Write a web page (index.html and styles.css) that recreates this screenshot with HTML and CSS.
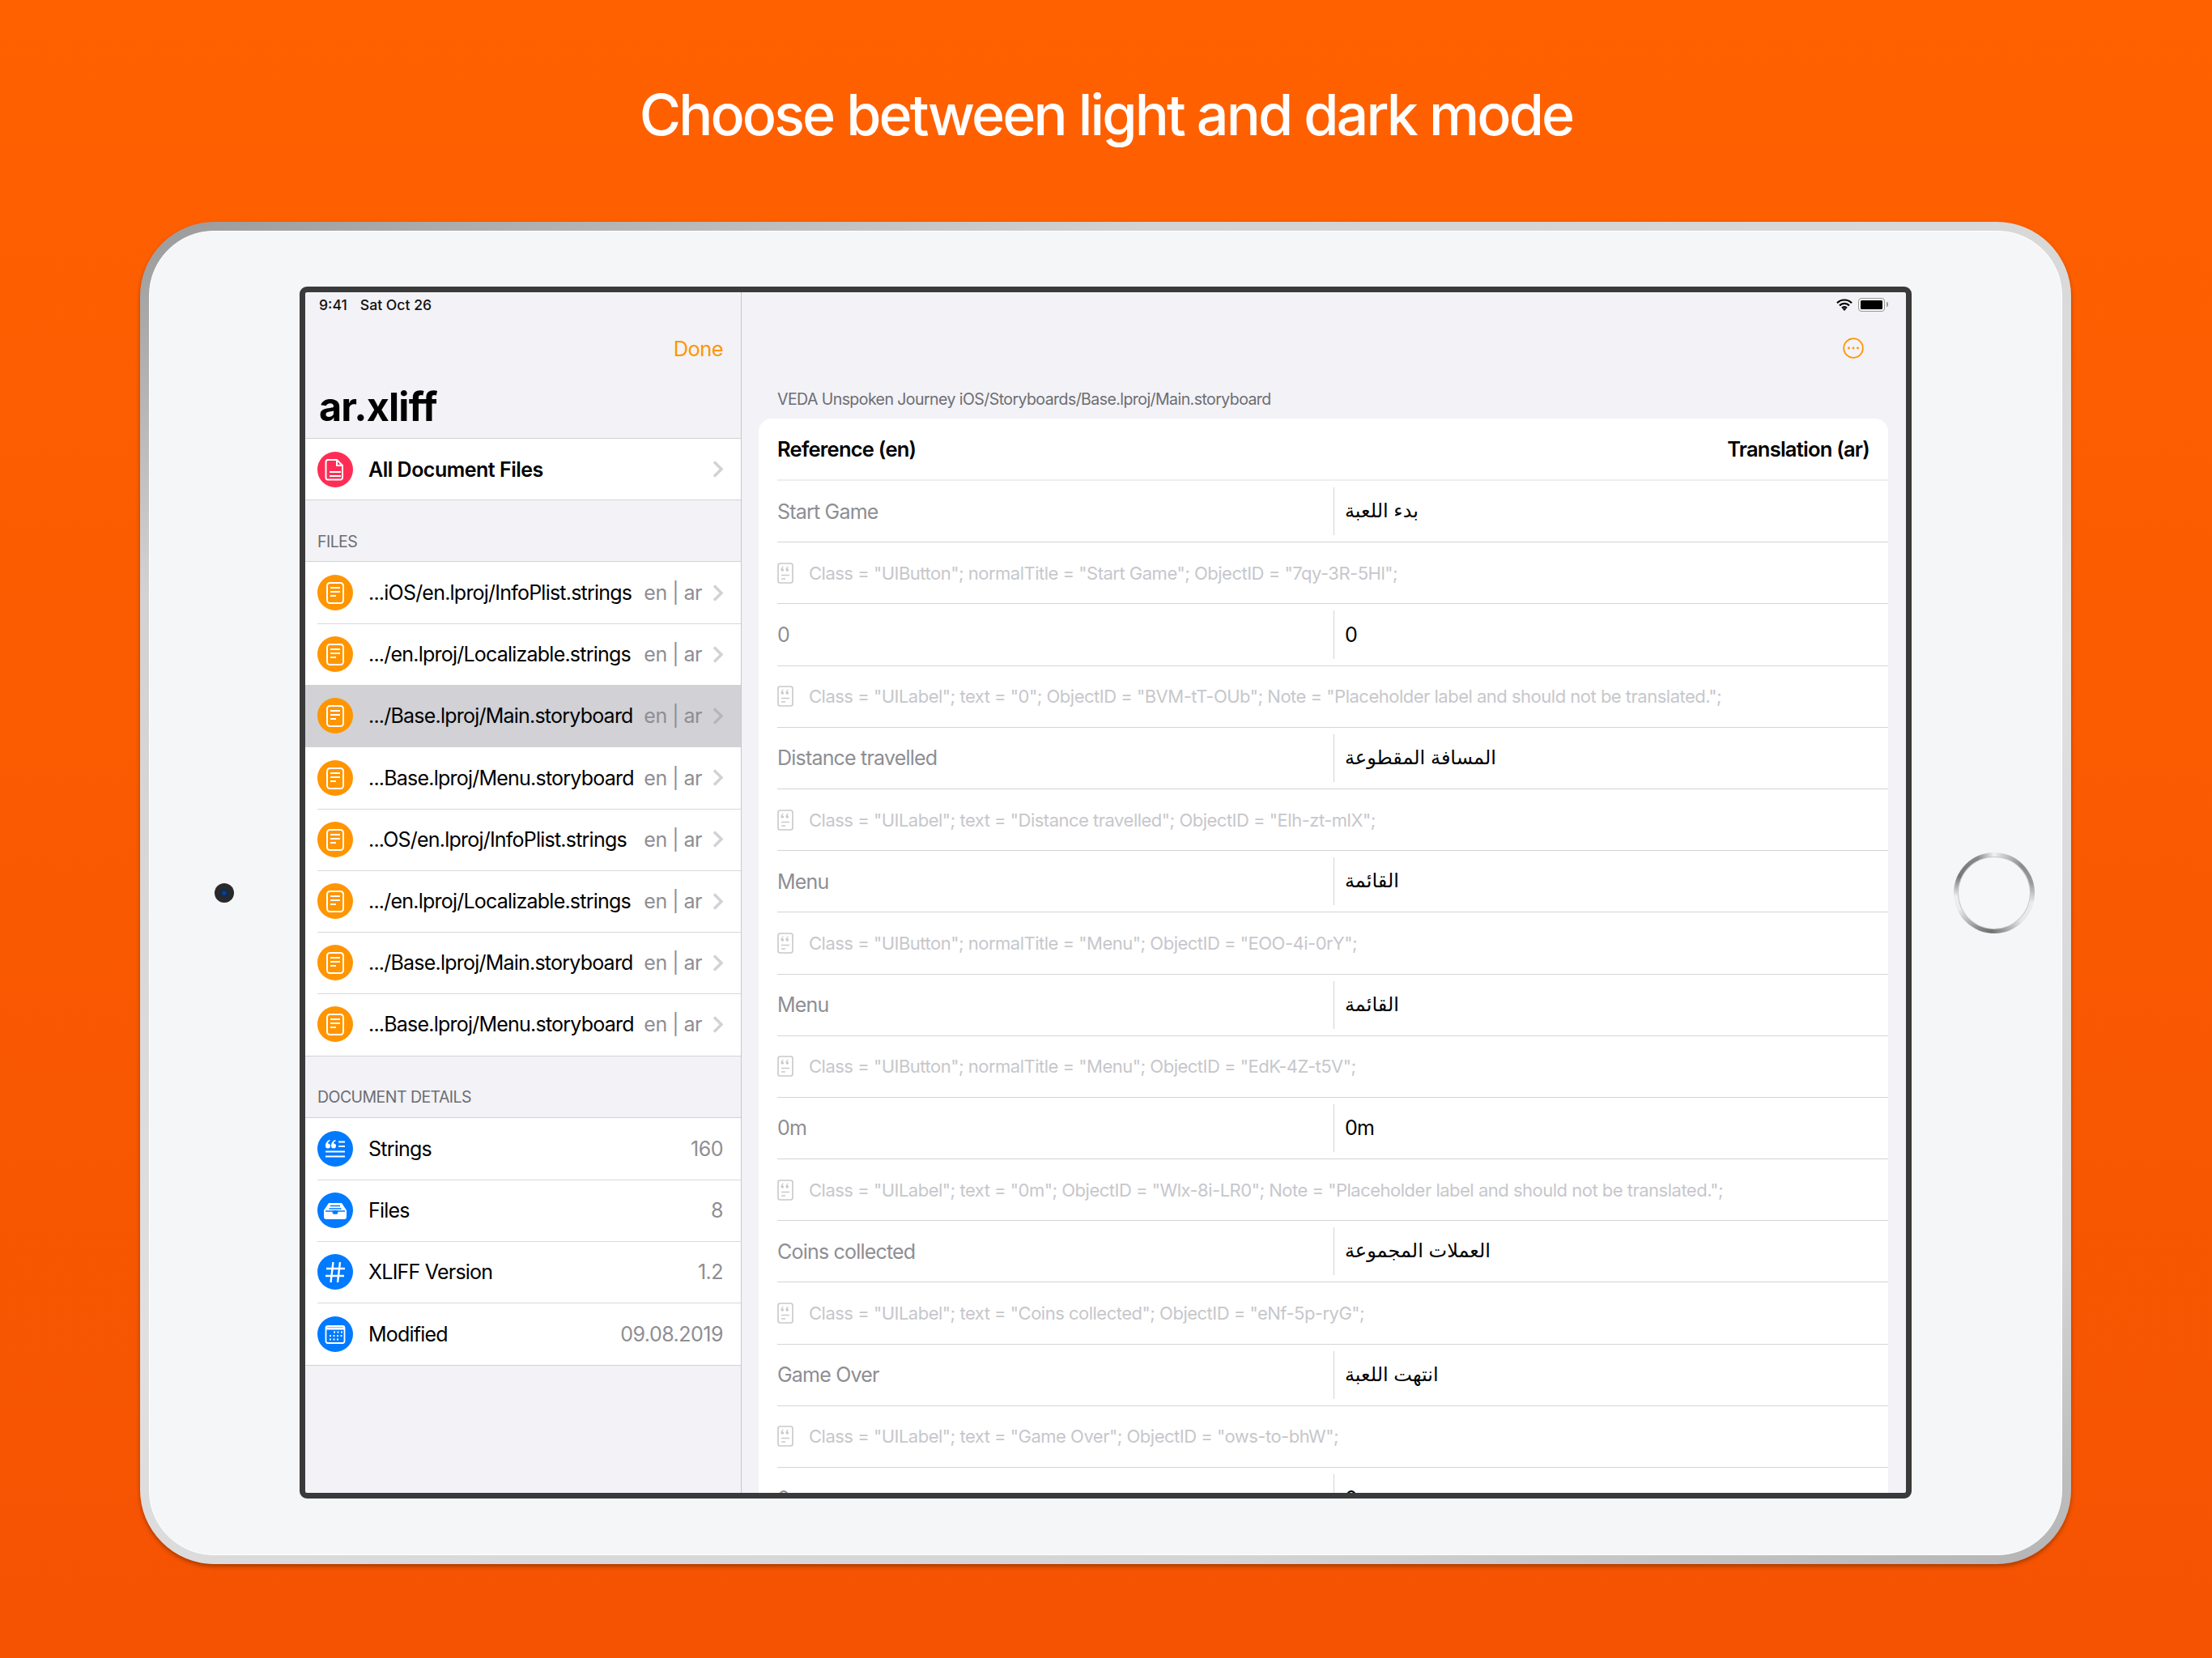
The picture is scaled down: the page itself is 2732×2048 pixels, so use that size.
FILE: index.html
```html
<!DOCTYPE html>
<html>
<head>
  <meta charset="UTF-8">
  <title>Choose between light and dark mode</title>
  <link rel="stylesheet" href="styles.css">
</head>
<body>
  <svg class="defs" width="0" height="0">
    <symbol id="i-doc" viewBox="0 0 44 44">
      <path d="M13 10h11l7 7v15a2.500 2.500 0 0 1-2.500 2.500h-15.500a2.500 2.500 0 0 1-2.500-2.500v-19.500a2.500 2.500 0 0 1 2.500-2.500z" fill="none" stroke="#fff" stroke-width="2"/>
      <path d="M24 10v7h7M15 25h14M15 30h14" fill="none" stroke="#fff" stroke-width="2"/>
    </symbol>
    <symbol id="i-page" viewBox="0 0 44 44">
      <rect x="12" y="10" width="20" height="25" rx="3.500" fill="none" stroke="#fff" stroke-width="2"/>
      <path d="M16 16h12M16 21h12M16 26h7" fill="none" stroke="#fff" stroke-width="2"/>
    </symbol>
    <symbol id="i-strings" viewBox="0 0 44 44">
      <path d="M10 18.500a3 3 0 1 0 3-3c0-1.500 1-2.500 2.500-3v-1.500c-3 .5-5.500 3.500-5.500 7.500z" fill="#fff"/>
      <path d="M17 18.500a3 3 0 1 0 3-3c0-1.500 1-2.500 2.500-3v-1.500c-3 .5-5.500 3.500-5.500 7.500z" fill="#fff"/>
      <path d="M26 13.500h8M26 19h8M10 25.500h24M10 31.500h24" fill="none" stroke="#fff" stroke-width="1.800"/>
    </symbol>
    <symbol id="i-tray" viewBox="0 0 44 44">
      <path d="M14 13h16l6 9v8a3 3 0 0 1-3 3h-22a3 3 0 0 1-3-3v-8z" fill="#fff"/>
      <path d="M16 16.500h12M14.500 20h15" fill="none" stroke="#007aff" stroke-width="1.400"/>
      <path d="M10 23h8.500l1.500 3h4l1.500-3h8.500" fill="none" stroke="#007aff" stroke-width="1.400"/>
      <path d="M19 22h6l-1 4h-4z" fill="#007aff"/>
    </symbol>
    <symbol id="i-hash" viewBox="0 0 44 44">
      <path d="M19.500 10l-3 25M28 10l-3 25M11 18h23M10 27h23" fill="none" stroke="#fff" stroke-width="2.400"/>
    </symbol>
    <symbol id="i-cal" viewBox="0 0 44 44">
      <rect x="10.500" y="12" width="23" height="21" rx="2.500" fill="none" stroke="#fff" stroke-width="1.800"/>
      <path d="M11 15h22" stroke="#fff" stroke-width="3"/>
      <path d="M20 19.500h11M15 24h16M15 28.500h12" fill="none" stroke="#fff" stroke-width="2" stroke-dasharray="2 2.500"/>
    </symbol>
    <symbol id="i-note" viewBox="0 0 20 26">
      <rect x="1" y="1" width="18" height="24" rx="2.500" fill="none" stroke="#c9c9cc" stroke-width="1.600"/>
      <path d="M4.500 9a1.800 1.800 0 1 0 1.800-1.800c0-.8.5-1.400 1.400-1.700v-1c-1.800.3-3.200 2-3.200 4.500z" fill="#c9c9cc"/>
      <path d="M10.500 9a1.800 1.800 0 1 0 1.800-1.800c0-.8.5-1.400 1.400-1.700v-1c-1.800.3-3.200 2-3.200 4.500z" fill="#c9c9cc"/>
      <path d="M5 15.500h10M5 20h5" fill="none" stroke="#c9c9cc" stroke-width="1.600"/>
    </symbol>
    <symbol id="i-chevron" viewBox="0 0 13 21">
      <path d="M2 1.500l9 9-9 9" fill="none" stroke="currentColor" stroke-width="3.400"/>
    </symbol>
  </svg>

  <h1 class="headline">Choose between light and dark mode</h1>

  <div class="device">
    <div class="bezel">
      <div class="side-left"><div class="camera"></div></div>

      <div class="screen">
        <aside class="sidebar">
          <div class="status">
            <span>9:41</span>
            <span>Sat Oct 26</span>
          </div>
          <div class="nav nav-end"><span class="done">Done</span></div>
          <div class="doc-title">ar.xliff</div>

          <div class="list">
            <div class="row strong">
              <svg class="badge pink"><use href="#i-doc"/></svg>
              <span class="row-name">All Document Files</span>
              <svg class="chevron"><use href="#i-chevron"/></svg>
            </div>
          </div>

          <div class="section-head files-head">FILES</div>
          <div class="list">
            <div class="row">
              <svg class="badge orange"><use href="#i-page"/></svg>
              <span class="row-name">...iOS/en.lproj/InfoPlist.strings</span>
              <span class="row-value">en | ar</span>
              <svg class="chevron"><use href="#i-chevron"/></svg>
            </div>
            <div class="row">
              <svg class="badge orange"><use href="#i-page"/></svg>
              <span class="row-name">.../en.lproj/Localizable.strings</span>
              <span class="row-value">en | ar</span>
              <svg class="chevron"><use href="#i-chevron"/></svg>
            </div>
            <div class="row selected">
              <svg class="badge orange"><use href="#i-page"/></svg>
              <span class="row-name">.../Base.lproj/Main.storyboard</span>
              <span class="row-value">en | ar</span>
              <svg class="chevron"><use href="#i-chevron"/></svg>
            </div>
            <div class="row">
              <svg class="badge orange"><use href="#i-page"/></svg>
              <span class="row-name">...Base.lproj/Menu.storyboard</span>
              <span class="row-value">en | ar</span>
              <svg class="chevron"><use href="#i-chevron"/></svg>
            </div>
            <div class="row">
              <svg class="badge orange"><use href="#i-page"/></svg>
              <span class="row-name">...OS/en.lproj/InfoPlist.strings</span>
              <span class="row-value">en | ar</span>
              <svg class="chevron"><use href="#i-chevron"/></svg>
            </div>
            <div class="row">
              <svg class="badge orange"><use href="#i-page"/></svg>
              <span class="row-name">.../en.lproj/Localizable.strings</span>
              <span class="row-value">en | ar</span>
              <svg class="chevron"><use href="#i-chevron"/></svg>
            </div>
            <div class="row">
              <svg class="badge orange"><use href="#i-page"/></svg>
              <span class="row-name">.../Base.lproj/Main.storyboard</span>
              <span class="row-value">en | ar</span>
              <svg class="chevron"><use href="#i-chevron"/></svg>
            </div>
            <div class="row">
              <svg class="badge orange"><use href="#i-page"/></svg>
              <span class="row-name">...Base.lproj/Menu.storyboard</span>
              <span class="row-value">en | ar</span>
              <svg class="chevron"><use href="#i-chevron"/></svg>
            </div>
          </div>

          <div class="section-head details-head">DOCUMENT DETAILS</div>
          <div class="list">
            <div class="row">
              <svg class="badge blue"><use href="#i-strings"/></svg>
              <span class="row-name">Strings</span>
              <span class="row-value">160</span>
            </div>
            <div class="row">
              <svg class="badge blue"><use href="#i-tray"/></svg>
              <span class="row-name">Files</span>
              <span class="row-value">8</span>
            </div>
            <div class="row">
              <svg class="badge blue"><use href="#i-hash"/></svg>
              <span class="row-name">XLIFF Version</span>
              <span class="row-value">1.2</span>
            </div>
            <div class="row">
              <svg class="badge blue"><use href="#i-cal"/></svg>
              <span class="row-name">Modified</span>
              <span class="row-value">09.08.2019</span>
            </div>
          </div>
        </aside>

        <main class="detail">
          <div class="status status-end">
            <svg class="wifi" viewBox="0 0 20 15">
              <path d="M1 5.200a12.800 12.800 0 0 1 18 0M4 8.400a8.500 8.500 0 0 1 12 0M7 11.400a4.200 4.200 0 0 1 6 0" fill="none" stroke="#000" stroke-width="2.200"/>
              <path d="M10 15l-2.300-2.500a3.300 3.300 0 0 1 4.600 0z"/>
            </svg>
            <div class="battery"><div class="battery-fill"></div></div>
          </div>
          <div class="nav nav-end more-nav">
            <svg class="more" viewBox="0 0 26 26">
              <circle cx="13" cy="13" r="11.800" fill="none" stroke="#ff9500" stroke-width="1.800"/>
              <circle cx="7.500" cy="13" r="1.400" fill="#ff9500"/>
              <circle cx="13" cy="13" r="1.400" fill="#ff9500"/>
              <circle cx="18.500" cy="13" r="1.400" fill="#ff9500"/>
            </svg>
          </div>
          <div class="path">VEDA Unspoken Journey iOS/Storyboards/Base.lproj/Main.storyboard</div>

          <div class="card">
            <div class="card-head">
              <span>Reference (en)</span>
              <span>Translation (ar)</span>
            </div>

            <div class="pair">
              <div class="source">Start Game</div>
              <div class="target" lang="ar">بدء اللعبة</div>
            </div>
            <div class="note">
              <svg class="note-icon"><use href="#i-note"/></svg>
              <span>Class = "UIButton"; normalTitle = "Start Game"; ObjectID = "7qy-3R-5Hl";</span>
            </div>

            <div class="pair">
              <div class="source">0</div>
              <div class="target">0</div>
            </div>
            <div class="note">
              <svg class="note-icon"><use href="#i-note"/></svg>
              <span>Class = "UILabel"; text = "0"; ObjectID = "BVM-tT-OUb"; Note = "Placeholder label and should not be translated.";</span>
            </div>

            <div class="pair">
              <div class="source">Distance travelled</div>
              <div class="target" lang="ar">المسافة المقطوعة</div>
            </div>
            <div class="note">
              <svg class="note-icon"><use href="#i-note"/></svg>
              <span>Class = "UILabel"; text = "Distance travelled"; ObjectID = "Elh-zt-mlX";</span>
            </div>

            <div class="pair">
              <div class="source">Menu</div>
              <div class="target" lang="ar">القائمة</div>
            </div>
            <div class="note">
              <svg class="note-icon"><use href="#i-note"/></svg>
              <span>Class = "UIButton"; normalTitle = "Menu"; ObjectID = "EOO-4i-0rY";</span>
            </div>

            <div class="pair">
              <div class="source">Menu</div>
              <div class="target" lang="ar">القائمة</div>
            </div>
            <div class="note">
              <svg class="note-icon"><use href="#i-note"/></svg>
              <span>Class = "UIButton"; normalTitle = "Menu"; ObjectID = "EdK-4Z-t5V";</span>
            </div>

            <div class="pair">
              <div class="source">0m</div>
              <div class="target">0m</div>
            </div>
            <div class="note">
              <svg class="note-icon"><use href="#i-note"/></svg>
              <span>Class = "UILabel"; text = "0m"; ObjectID = "Wlx-8i-LR0"; Note = "Placeholder label and should not be translated.";</span>
            </div>

            <div class="pair">
              <div class="source">Coins collected</div>
              <div class="target" lang="ar">العملات المجموعة</div>
            </div>
            <div class="note">
              <svg class="note-icon"><use href="#i-note"/></svg>
              <span>Class = "UILabel"; text = "Coins collected"; ObjectID = "eNf-5p-ryG";</span>
            </div>

            <div class="pair">
              <div class="source">Game Over</div>
              <div class="target" lang="ar">انتهت اللعبة</div>
            </div>
            <div class="note">
              <svg class="note-icon"><use href="#i-note"/></svg>
              <span>Class = "UILabel"; text = "Game Over"; ObjectID = "ows-to-bhW";</span>
            </div>

            <div class="pair">
              <div class="source">0</div>
              <div class="target">0</div>
            </div>
          </div>
        </main>
      </div>

      <div class="side-right"><div class="home"></div></div>
    </div>
  </div>
</body>
</html>
```

FILE: styles.css
```css
html, body {
  margin: 0;
  padding: 0;
}
body {
  width: 2732px;
  height: 2048px;
  overflow: hidden;
  background: linear-gradient(180deg, #ff6100 0%, #f55302 100%);
  font-family: Inter, "DejaVu Sans", sans-serif;
}
.defs {
  display: block;
  height: 0;
}
.headline {
  height: 274px;
  margin: 0;
  padding-top: 8px;
  box-sizing: border-box;
  display: flex;
  align-items: center;
  justify-content: center;
  color: #fff;
  font-size: 70px;
  font-weight: 500;
  letter-spacing: -2.85px;
}

/* tablet body */
.device {
  width: 2385px;
  height: 1658px;
  margin-left: 173px;
  padding: 11px;
  box-sizing: border-box;
  border-radius: 92px;
  background: linear-gradient(160deg, #9a9a9a 0%, #d2d2d2 18%, #e0e0e0 55%, #d4d4d4 85%, #b4b4b4 100%);
  box-shadow: 0 3px 5px rgba(110, 40, 0, 0.55);
}
.bezel {
  height: 100%;
  display: flex;
  align-items: center;
  box-sizing: border-box;
  border: 1px solid #fff;
  border-radius: 80px;
  background-color: #f5f6f8;
}
.side-left {
  width: 185px;
  padding-right: 2px;
  box-sizing: border-box;
  display: flex;
  justify-content: center;
}
.side-right {
  flex: 1;
  display: flex;
  justify-content: flex-end;
  padding-right: 33px;
}
.camera {
  width: 24px;
  height: 24px;
  border-radius: 50%;
  background: radial-gradient(circle, #0d4f9e 0, #0b2a55 4px, #2a2a2c 6px);
}
.home {
  width: 100px;
  height: 100px;
  border-radius: 50%;
  display: flex;
  align-items: center;
  justify-content: center;
  background: conic-gradient(#f2f2f2 0deg, #d0d0d0 12deg, #8c8c8c 45deg, #9a9a9a 75deg, #ececec 105deg, #e8e8e8 135deg, #6f6f6f 185deg, #8c8c8c 205deg, #ececec 245deg, #efefef 265deg, #777 295deg, #8a8a8a 335deg, #f2f2f2 360deg);
}
.home:before {
  content: "";
  width: 88px;
  height: 88px;
  border-radius: 50%;
  background-color: #f6f7f9;
  box-shadow: 0 0 0 1px #c9c9c9;
}

/* screen */
.screen {
  width: 1991px;
  height: 1497px;
  margin-bottom: 1px;
  flex: none;
  box-sizing: border-box;
  border: 7px solid #3a3a3a;
  border-radius: 9px;
  display: flex;
  overflow: hidden;
  background-color: #f2f2f7;
  color: #000;
}
.sidebar {
  width: 539px;
  flex: none;
  box-sizing: border-box;
  border-right: 1px solid #c8c8cc;
}
.status {
  height: 30px;
  padding: 0 17px;
  display: flex;
  align-items: center;
  gap: 16px;
  font-size: 17.6px;
  font-weight: 500;
  color: #111;
}
.status-end {
  justify-content: flex-end;
  padding: 0;
  gap: 7px;
}
.wifi {
  width: 20px;
  height: 15px;
}
.battery {
  width: 33px;
  height: 17px;
  padding: 2px;
  margin-right: 4px;
  box-sizing: border-box;
  border: 1.5px solid #999;
  border-radius: 4px;
  position: relative;
}
.battery:after {
  content: "";
  position: absolute;
  right: -5px;
  top: 4px;
  width: 2px;
  height: 6px;
  background-color: #999;
  border-radius: 0 2px 2px 0;
}
.battery-fill {
  height: 100%;
  background-color: #000;
  border-radius: 1.5px;
}
.nav {
  height: 78px;
  display: flex;
  align-items: center;
}
.nav-end {
  justify-content: flex-end;
}
.done {
  padding-right: 22px;
  font-size: 25.5px;
  letter-spacing: -0.6px;
  color: #ff9500;
}
.doc-title {
  height: 72px;
  padding: 0 17px 6px;
  display: flex;
  align-items: center;
  font-size: 48.5px;
  font-weight: 700;
  letter-spacing: -0.8px;
  box-sizing: border-box;
}

/* sidebar lists */
.list {
  background-color: #fff;
  border-top: 1px solid #d2d2d6;
  border-bottom: 1px solid #d2d2d6;
}
.row {
  height: 76.2px;
  padding-right: 22px;
  position: relative;
  display: flex;
  align-items: center;
  box-sizing: border-box;
  font-size: 25px;
  letter-spacing: -0.78px;
}
.row + .row:before {
  content: "";
  position: absolute;
  left: 15px;
  right: 0;
  top: 0;
  border-top: 1px solid #d9d9dd;
}
.row.strong {
  height: 75px;
  font-weight: 600;
  letter-spacing: -0.5px;
}
.row.selected {
  background-color: #d1d1d6;
}
.row.selected:before,
.row.selected + .row:before {
  display: none;
}
.badge {
  width: 44px;
  height: 44px;
  flex: none;
  margin: 0 19px 0 15px;
  border-radius: 50%;
}
.pink {
  background-color: #ff2d55;
}
.orange {
  background-color: #ff9500;
}
.blue {
  background-color: #007aff;
}
.row-name {
  flex: 1;
  min-width: 0;
  white-space: nowrap;
}
.row-value {
  flex: none;
  white-space: nowrap;
  letter-spacing: -0.5px;
  color: #8e8e93;
}
.chevron {
  width: 13px;
  height: 21px;
  margin-left: 13px;
  flex: none;
  color: #d1d1d6;
}
.selected .chevron {
  color: #b6b6bb;
}
.section-head {
  padding: 0 15px;
  font-size: 19.5px;
  letter-spacing: -0.55px;
  color: #6d6d72;
  display: flex;
  align-items: center;
  box-sizing: border-box;
}
.files-head {
  height: 75px;
  padding-top: 27px;
}
.details-head {
  height: 75.4px;
  padding-top: 25px;
}

/* right pane */
.detail {
  flex: 1;
  padding: 0 22px 0 21px;
  min-width: 0;
}
.more-nav {
  padding-right: 30px;
}
.more {
  width: 26px;
  height: 26px;
}
.path {
  height: 48px;
  padding-left: 23px;
  display: flex;
  align-items: center;
  font-size: 19.5px;
  letter-spacing: -0.56px;
  color: #6d6d72;
  box-sizing: border-box;
}
.card {
  background-color: #fff;
  border-radius: 16px 16px 0 0;
  padding-left: 23px;
}
.card-head {
  height: 77px;
  padding-right: 23px;
  display: flex;
  align-items: center;
  justify-content: space-between;
  font-size: 25.5px;
  font-weight: 600;
  letter-spacing: -0.75px;
  border-bottom: 2px solid #eeeeee;
  box-sizing: border-box;
}
.pair {
  height: 76.2px;
  padding: 8px 0;
  display: flex;
  align-items: stretch;
  font-size: 25px;
  letter-spacing: -0.8px;
  border-bottom: 1px solid #d4d4d6;
  box-sizing: border-box;
}
.source {
  width: 687px;
  flex: none;
  display: flex;
  align-items: center;
  color: #8e8e93;
}
.target {
  flex: 1;
  padding-left: 13px;
  display: flex;
  align-items: center;
  border-left: 1px solid #d4d4d6;
}
.target[lang="ar"] {
  padding-bottom: 2px;
  font-size: 24px;
  letter-spacing: -0.3px;
}
.note {
  height: 76.2px;
  display: flex;
  align-items: center;
  gap: 19px;
  font-size: 22px;
  letter-spacing: -0.5px;
  color: #c7c7cc;
  border-bottom: 1px solid #d4d4d6;
  box-sizing: border-box;
  white-space: nowrap;
}
.note-icon {
  width: 20px;
  height: 26px;
  flex: none;
}
```
